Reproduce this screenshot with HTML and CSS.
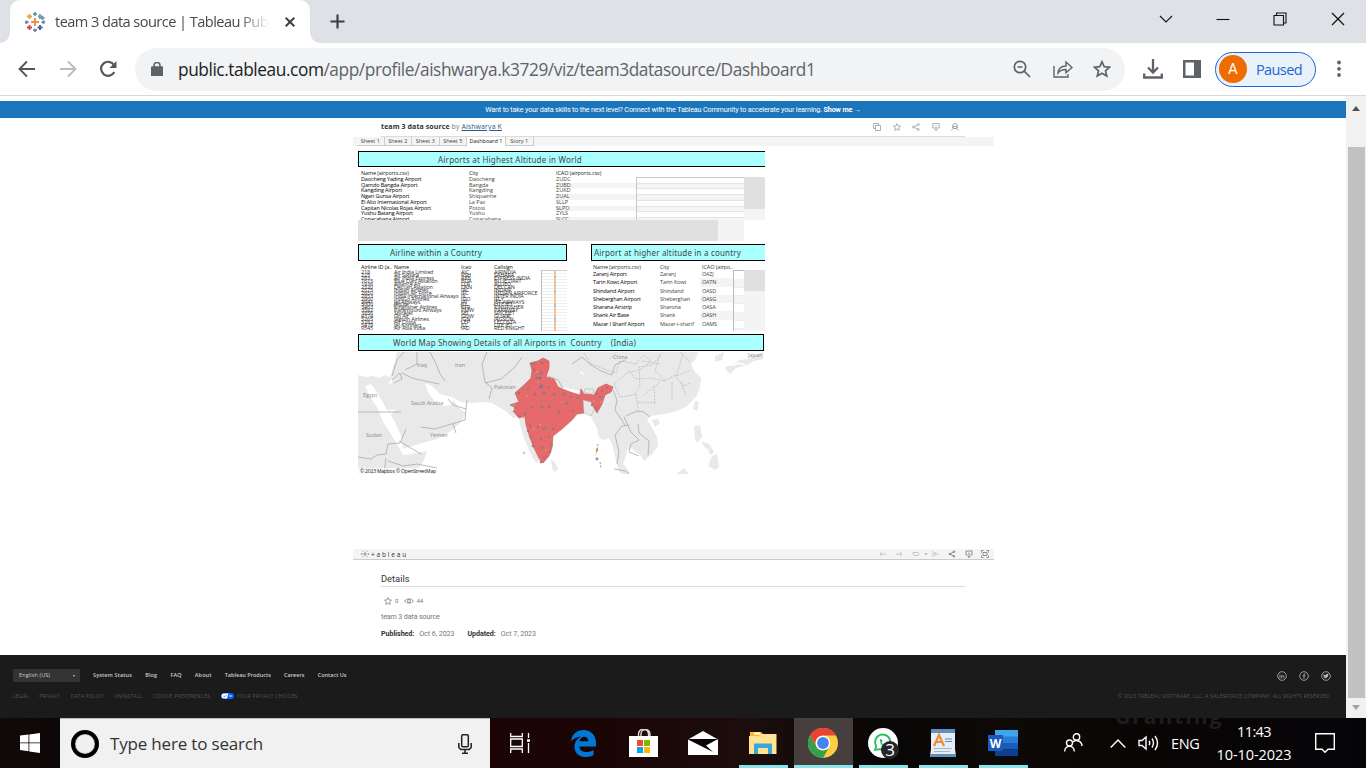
FILE: index.html
```html
<!DOCTYPE html>
<html lang="en">
<head>
<meta charset="utf-8">
<title>team 3 data source | Tableau Public</title>
<link rel="stylesheet" href="styles.css">
</head>
<body>
<div class="screen">
<header class="tabstrip">
  <div class="tab">
    <svg class="fav" viewBox="0 0 20 20" fill="none" stroke-width="1.8"><path stroke="#f28e4b" stroke-width="2" d="M10 6v8M6 10h8"/><path stroke="#6f9fae" d="M10 0v4M8 2h4M17.500 4v4M15.500 6h4"/><path stroke="#eaa23b" d="M4.500 2v5M2 4.500h5"/><path stroke="#6f9fae" d="M15 2v5M13 4.500h5"/><path stroke="#ce4257" d="M4.500 13v5M2 15.500h5"/><path stroke="#3f619c" d="M15 13v5M12.500 15.500h5"/><path stroke="#7a86b5" d="M10 16.500v3.500M8 18.200h4M1.500 8.500v3.500M0 10h3.500M18.500 8.500v3.500M16.500 10h3.500"/></svg>
    <span class="tabtitle"><span class="m-tab">team 3 data source | Tableau Pub</span></span>
    <svg class="x" viewBox="0 0 10 10" stroke="#3c4043" stroke-width="2"><path d="M.7.7l8.600 8.600M9.300.7L.7 9.300"/></svg>
  </div>
  <svg class="plus" viewBox="0 0 16 16" stroke="#3c4043" stroke-width="2.300"><path d="M8 .5v15M.5 8h15"/></svg>
  <div class="winbtns">
    <svg viewBox="0 0 14 14"><path d="M1 4l6 6 6-6"/></svg>
    <svg viewBox="0 0 14 14"><path d="M.5 7.500h13"/></svg>
    <svg viewBox="0 0 14 14"><path d="M1 3.500h9.500V13H1zM3.500 3.500v-2.500h9.500v10h-2.500"/></svg>
    <svg viewBox="0 0 14 14"><path d="M1 1l12 12M13 1L1 13" stroke-width="1.300"/></svg>
  </div>
</header>
<div class="toolbar">
  <div class="nav">
    <svg viewBox="0 0 18 18" stroke="#54585d"><path d="M17 9H2M9 1.500L1.500 9 9 16.500"/></svg>
    <svg viewBox="0 0 18 18" stroke="#b9bbbe"><path d="M1 9h15M9 1.500L16.500 9 9 16.500"/></svg>
    <svg viewBox="0 0 18 18" stroke="#54585d"><path stroke-width="2.200" d="M15.300 12A7 7 0 1 1 15 5"/><path fill="#54585d" stroke="none" d="M17.500 1v7h-7z"/></svg>
  </div>
  <div class="omni">
    <svg class="lock" viewBox="0 0 12 14"><rect x=".5" y="5" width="11" height="9" rx="1" fill="#5f6368"/><path d="M3 6V3.500a3 3 0 0 1 6 0V6" fill="none" stroke="#5f6368" stroke-width="1.600"/></svg>
    <div class="url"><span class="m-url"><b>public.tableau.com</b>/app/profile/aishwarya.k3729/viz/team3datasource/Dashboard1</span></div>
    <svg viewBox="0 0 18 18"><circle cx="7" cy="7" r="5.700"/><path d="M4.500 7h5M11.200 11.200L17 17" /></svg>
    <svg class="share" viewBox="0 0 20 18"><path d="M1 6v11h14v-3M5 13c.5-5 3-7 8-7V2l6 5.500-6 5.200V9.500c-4 0-6 1-8 3.500z" stroke-width="1.400"/></svg>
    <svg viewBox="0 0 18 18"><path d="M9 1.800l2.200 4.900 5.300.5-4 3.600 1.200 5.300L9 13.300l-4.700 2.800 1.200-5.300-4-3.600 5.300-.5z"/></svg>
  </div>
  <svg class="dl" viewBox="0 0 20 20" fill="none" stroke="#5f6368" stroke-width="2.300"><path d="M10 0v13M5 8.500l5 5 5-5M1.200 14.500v4h17.600v-4"/></svg>
  <svg class="side" viewBox="0 0 18 18"><path fill="#5f6368" fill-rule="evenodd" d="M0 0h18v18H0zM2.500 2.500v13h8.500v-13z"/></svg>
  <div class="profile"><span class="av">A</span><span class="m-paused">Paused</span></div>
  <svg class="dots" viewBox="0 0 4 18" fill="#5f6368"><circle cx="2" cy="2.500" r="1.900"/><circle cx="2" cy="8.800" r="1.900"/><circle cx="2" cy="15" r="1.900"/></svg>
</div>
<div class="viewport">
<main class="page">
  <div class="banner"><span class="m-banner">Want to take your data skills to the next level? Connect with the Tableau Community to accelerate your learning. <b>Show me →</b></span></div>
  <div class="titlebar">
    <span class="m-title"><b>team 3 data source</b> by <u>Aishwarya K</u></span>
    <div class="acts">
      <svg viewBox="0 0 8 8"><path d="M2.500 2.500h5v5h-5zM2.500 5.500h-2v-5h5v2"/></svg>
      <svg viewBox="0 0 8 8"><path d="M4 .5l1 2.400 2.600.2-2 1.700.7 2.600L4 6 1.700 7.400l.7-2.600-2-1.700L3 2.900z"/></svg>
      <svg viewBox="0 0 8 8"><circle cx="1.500" cy="4" r="1"/><circle cx="6.300" cy="1.500" r="1"/><circle cx="6.300" cy="6.500" r="1"/><path d="M2.400 3.500l3-1.500M2.400 4.500l3 1.500"/></svg>
      <svg viewBox="0 0 8 8"><path d="M3 5H.8V.6h6.400V5H5M4 2.500v5M2.600 6L4 7.500 5.400 6"/></svg>
      <svg viewBox="0 0 8 8"><path d="M1.500 5V3a2.500 2.500 0 0 1 5 0v2M.5 7.500l1.500-2h4l1.500 2M2.500 3.500h3v2h-3z"/></svg>
    </div>
  </div>
  <div class="viz">
    <nav class="sheets"><span>Sheet 1</span><span>Sheet 2</span><span>Sheet 3</span><span>Sheet 5</span><span class="on">Dashboard 1</span><span>Story 1</span></nav>
    <div class="dash">
      <h2 class="bar b1"><span class="m-h1">Airports at Highest Altitude in World</span></h2>
      <section class="alt">
        <div class="cols"><div class="hd">Name (airports.csv)</div><div class="hd">City</div><div class="hd">ICAO (airports.csv)</div></div>
        <div class="body">
          <div class="rows">
            <div><b>Daocheng Yading Airport</b><span>Daocheng</span><i>ZUDC</i></div>
            <div><b>Qamdo Bangda Airport</b><span>Bangda</span><i>ZUBD</i></div>
            <div><b>Kangding Airport</b><span>Kangding</span><i>ZUKD</i></div>
            <div><b>Ngari Gunsa Airport</b><span>Shiquanhe</span><i>ZUAL</i></div>
            <div><b>El Alto International Airport</b><span>La Paz</span><i>SLLP</i></div>
            <div><b>Capitan Nicolas Rojas Airport</b><span>Potosi</span><i>SLPO</i></div>
            <div><b>Yushu Batang Airport</b><span>Yushu</span><i>ZYLS</i></div>
            <div><b>Copacabana Airport</b><span>Copacabana</span><i>SLCC</i></div>
          </div>
          <div class="pane"></div><div class="vs"></div>
        </div>
        <div class="hs"></div>
      </section>
      <div class="pair">
        <section class="left">
          <h2 class="bar b2"><span class="m-h2">Airline within a Country</span></h2>
          <div class="lh"><div>Airline ID (a..</div><div>Name</div><div>Icao</div><div>Callsign</div></div>
          <div class="lb">
            <pre>218
225
283
1615
1936
2520
2575
2850
2853
2860
2941
3000
3463
3582
3856
4374
5265
5282
5479
9545</pre>
            <pre>Air India Limited
Air Sahara
Air India Express
Blue Dart Aviation
Alliance Air
Deccan Aviation
Indian Airlines
Indian Air Force
India International Airways
IndiGo Airlines
Jet Airways
JetLite
Kingfisher Airlines
Paramount Airways
Spicejet
Go Air
Jagson Airlines
Air Costa
Jet Konnect
Air Asia India</pre>
            <pre>AIC
RSH
AXB
BDA
LLR
DKN
IAC
IFC
IIL
IGO
JAI
JLL
KFR
PMW
SEJ
GOW
JGN
LEP
JLL
IAD</pre>
            <pre>AIRINDIA
SAHARA
EXPRESS INDIA
BLUE DART
ALLIED
DECCAN
INDAIR
INDIAN AIRFORCE
INTER INDIA
IFLY
JET AIRWAYS
LITE JET
KINGFISHER
PARAWAY
SPICEJET
GOAIR
JAGSON
LECOSTA
LITE JET
RED KNIGHT</pre>
            <div class="strip"><i></i></div>
          </div>
        </section>
        <section class="right">
          <h2 class="bar b3"><span class="m-h3">Airport at higher altitude in a country</span></h2>
          <div class="rh"><div>Name (airports.csv)</div><div>City</div><div>ICAO (airpo..</div></div>
          <div class="rb">
            <div class="rrows">
              <div><b>Zaranj Airport</b><span>Zaranj</span><i>OAZJ</i></div>
              <div><b>Tarin Kowt Airport</b><span>Tarin Kowt</span><i>OATN</i></div>
              <div><b>Shindand Airport</b><span>Shindand</span><i>OASD</i></div>
              <div><b>Sheberghan Airport</b><span>Sheberghan</span><i>OASG</i></div>
              <div><b>Sharana Airstrip</b><span>Sharona</span><i>OASA</i></div>
              <div><b>Shank Air Base</b><span>Shank</span><i>OASH</i></div>
              <div><b>Mazar I Sharif Airport</b><span>Mazar-i-sharif</span><i>OAMS</i></div>
            </div>
            <div class="rpane"></div><div class="rvs"></div>
          </div>
        </section>
      </div>
      <h2 class="bar b4"><span class="m-h4">World Map Showing Details of all Airports in&nbsp; Country &nbsp; &nbsp;(India)</span></h2>
      <svg class="map" viewBox="358 352 406 122">
        <g fill="#e9e9e9">
          <path d="M358 375l7 2 8-1 6 2 6-3 4 2 2-1 2-9 2-5 2-12h304l-3 3-3 7-4 4 4 8 6 6-1 10-4 9-9 9-10 5-12 3-14 2-4 3 4 7 6 11 1 9-6 8-8 7-3-5-5-4-5-4-4 2-1 6-3 8 5 6 4 8h-8l-6-9-3-13-3-12-3-6-5 2-5-2-2-10-5-9-3-9-5-5-6-4-2 13-7 1-5 6-9 8-8 7-2 12-3 8-5 7-3-3-5-10-5-12-4-13-1-9-6 2-6-6-8-5-7-4-8-1-12 1-11-1-9-5-12-3-8-8-7-3 3 9 7 10 8 4 8-1 2-5 6 8 7 5-5 9-10 9-14 8-18 5-16 5-2-13-6-14-9-14-9-16-6-8-6 2 4 9 8 12 6 15 8 12 7 12 5 9 8-1 16-3-3 9-9 14h-80z"/>
          <path d="M551 459l4 3 3 7-3 3-3-4zM652 420l6-1 2 4-5 4zM695 401l4 1-2 9-4-2zM694 426l6-1 2 12-5 6-2-4zM712 456l5-2 2 13-4 3-7-4zM701 441l8 3 5 8-3 3-7-9zM676 474l8-6 5 6zM715 356l9-4-2 8-7 2zM725 367l8-2 6-5 9-1 8-4 7-3v7l-9 2-9 5-9 2-6 6-4-4z"/>
        </g>
        <g fill="none" stroke="#fff" stroke-width="1.500"><path d="M384 412l10-2-4 5M580 372l4 2M697 445l5 7 7-3M733 366l5-3 7 2"/></g>
        <path fill="#fff" d="M568 396l17 3-1-7-12-3zM390 386l3-7-4 3zM560 389c9 1 13 4 21 5v-2l-17-5z"/>
        <g fill="none" stroke="#a9a9a9" stroke-width=".8">
          <path d="M358 412h36l7 0M392 376l5-16 7-8M392 380l8-7 2 6-8 4M402 373l10 5 13 3 14 3M405 370l12-6 0-12M430 352l6 12 4 10 5 7M448 399l5 6 13 4 1-9M466 409l-1 11-20 6-10 3-14-2M453 424l3 9M358 457l13 2 6-4 9-1 2-10 12-1 6-14M399 441l22 13M388 461l15 5 14-2 20 4M386 458l-2 15M487 352l-5 12 3 18 7 6-3 11M485 383l16-4 14-12 7-10M548 376l10 4 5 8"/>
          <path d="M572 364l10-7 9 8 10 6 11 4 3-10 10-5M613 390l4 10-2 10 6 9 4 6M626 416l11-5 7 1 6 5M629 425l-7 1-7 9 4 17-2 12M624 417l7 15 8 8-8 4-2 8 10 4M638 424l1 9 10 8-1 14M614 469l11 2 4 3"/>
        </g>
        <g fill="none" stroke="#b8b8b8" stroke-width=".7" stroke-dasharray="2 1"><path d="M584 353l6 10 14 6 12 4 4-12 16 3 7-9 8 6-9 8-15 4-13 11 6 13 14-2 6-9-1-19 13-2 9-10M628 370l8 9 15-1 14 3 10-6 8 11 8-3M636 394l2 16M654 386l1 18M672 382l0 17M660 354l-5 17 11 10M683 354l-7 22 15-6M644 395l16-13M681 382l5 14M610 359l7-7M642 361l18 3M638 402l17 1M690 362l-10-10"/></g>
        <path fill="#e66a6c" stroke="#c95f60" stroke-width=".7" d="M530 363l8-2 5-3 6 3v7l-3 9 8 2 4 8 7 3 5 2 10 3 1-6 3 5 10 1 4-7 8-4 7 3-2 5-6 3-3 9-5 9-3-5-4-5-7-2 1 12-7 1-5 6-10 9-9 7-1 12-3 8-6 7-3-3-5-10-5-12-4-13-1-9-6 2-6-7 4-3-7-3 9-3-4-9 9-8 7-7 1-8z"/>
        <path fill="#e9e9e9" stroke="#999" stroke-width=".4" d="M584 392l1-3h8l1 3-3 2zM583 400l8 2 3 7-3 7-7-3z"/>
        <g fill="#8a7f9a" stroke="#9b7357" stroke-width=".5"><circle cx="534" cy="364" r="1.100"/><circle cx="542" cy="363" r="1.100"/><circle cx="534" cy="370" r="1.200"/><circle cx="541" cy="373" r="1.200"/><circle cx="537" cy="378" r="1.200"/><circle cx="541" cy="387" r="1.200"/><circle cx="549" cy="387" r="1"/><circle cx="528" cy="389" r="1.200"/><circle cx="519" cy="393" r="1.200"/><circle cx="535" cy="394" r="1.200"/><circle cx="544" cy="393" r="1.200"/><circle cx="554" cy="394" r="1.200"/><circle cx="564" cy="394" r="1.200"/><circle cx="571" cy="397" r="1"/><circle cx="578" cy="398" r="1"/><circle cx="515" cy="408" r="1"/><circle cx="519" cy="416" r="1"/><circle cx="525" cy="414" r="1.100"/><circle cx="532" cy="407" r="1"/><circle cx="542" cy="407" r="1.200"/><circle cx="549" cy="407" r="1.100"/><circle cx="559" cy="412" r="1.200"/><circle cx="567" cy="403" r="1.200"/><circle cx="573" cy="411" r="1"/><circle cx="530" cy="426" r="1.100"/><circle cx="538" cy="427" r="1"/><circle cx="544" cy="429" r="1.100"/><circle cx="553" cy="429" r="1.100"/><circle cx="531" cy="437" r="1"/><circle cx="541" cy="439" r="1"/><circle cx="549" cy="437" r="1"/><circle cx="533" cy="446" r="1.100"/><circle cx="542" cy="448" r="1.100"/><circle cx="551" cy="445" r="1"/><circle cx="550" cy="452" r="1"/><circle cx="544" cy="457" r="1"/><circle cx="541" cy="462" r="1.100"/><circle cx="597" cy="394" r="1"/><circle cx="602" cy="391" r="1"/><circle cx="607" cy="388" r="1"/><circle cx="592" cy="405" r="1"/><circle cx="596" cy="408" r="1"/><circle cx="600" cy="397" r="1"/></g>
        <g fill="#d69a4c"><circle cx="537" cy="372" r="1"/><circle cx="538" cy="382" r="1"/><circle cx="527" cy="396" r="1"/><circle cx="514" cy="405" r="1"/><circle cx="524" cy="417" r="1"/><circle cx="562" cy="402" r="1"/><circle cx="534" cy="429" r="1"/><circle cx="540" cy="425" r="1"/><circle cx="546" cy="450" r="1"/><circle cx="601" cy="402" r="1"/><circle cx="594" cy="401" r="1"/><circle cx="524" cy="453" r="1.400" fill="#edc9a5"/><circle cx="597" cy="450" r="1.400"/></g>
        <g fill="#5a79a8"><circle cx="540" cy="378" r="1.300"/><circle cx="541" cy="386" r="1.300"/><circle cx="528" cy="431" r="1"/></g><g fill="#64a06e"><circle cx="542" cy="400" r="1"/><circle cx="552" cy="445" r="1"/><circle cx="546" cy="428" r="1"/><circle cx="531" cy="364" r="1"/></g>
        <path fill="none" stroke="#c08a8a" stroke-width="1" stroke-dasharray="2 1.500" d="M598 444l-2 11M600 462l1 6"/><circle cx="597" cy="459" r="1.400" fill="#8f8f8f"/>
        <g class="lab"><text x="417" y="366.500">Iraq</text><text x="455" y="367">Iran</text><text x="494" y="388.500">Pakistan</text><text x="363" y="396.500">Egypt</text><text x="411" y="404.500">Saudi Arabia</text><text x="366" y="436.500">Sudan</text><text x="430" y="436.500">Yemen</text><text x="613" y="359">China</text><text x="748" y="356.500">Japan</text></g>
        <path fill="#fff" opacity=".7" d="M358 468h78v6h-78z"/><text class="attr" x="360" y="473">© 2023 Mapbox © OpenStreetMap</text>
      </svg>
    </div>
    <div class="vizbar">
      <svg class="tl" viewBox="0 0 8 8"><path d="M4 2v4M2 4h4M2 .8v1M6 .8v1M2 6.200v1M6 6.200v1M.6 3v2M7.400 3v2"/></svg><span class="m-tableau">+ableau</span>
      <div class="vi">
        <svg viewBox="0 0 8 8"><path d="M7 4H1M3 2L1 4l2 2"/></svg><svg viewBox="0 0 8 8"><path d="M1 4h6M5 2l2 2-2 2"/></svg><svg viewBox="0 0 8 8"><path d="M1 2.500h5l1.300 1.500L6 5.500H2L.7 4z"/></svg><svg class="car" viewBox="0 0 4 8"><path d="M1 3.500h2L2 5z" fill="#aaa"/></svg><svg viewBox="0 0 8 8"><path d="M1 1v6M7 4H2M4 2L2 4l2 2"/></svg><svg class="dk" viewBox="0 0 8 8"><circle cx="1.800" cy="4" r=".8"/><circle cx="6" cy="1.700" r=".8"/><circle cx="6" cy="6.300" r=".8"/><path d="M2 4l4-2.300M2 4l4 2.300"/></svg><svg class="dk" viewBox="0 0 8 8"><path d="M2.500 5H1V1h6v4H5.500M4 2.500v5M2.600 6L4 7.500 5.400 6"/></svg><svg class="dk" viewBox="0 0 8 8"><path d="M2 2.500h4v3H2zM.5 2.500v-2h2M5.500.5h2v2M.5 5.500v2h2M7.500 5.500v2h-2"/></svg>
      </div>
    </div>
  </div>
  <section class="details">
    <h3><span class="m-det">Details</span></h3>
    <div class="stats"><svg viewBox="0 0 8 8"><path d="M4 .5l1 2.400 2.600.2-2 1.700.7 2.600L4 6 1.700 7.400l.7-2.600-2-1.700L3 2.900z"/></svg><span>0</span><svg class="eye" viewBox="0 0 10 8"><path d="M.5 4Q5-.5 9.500 4 5 8.500.5 4z"/><circle cx="5" cy="4" r="1.500"/></svg><span>44</span></div>
    <p class="desc"><span class="m-desc">team 3 data source</span></p>
    <p class="dates"><b class="m-pub">Published:</b><span class="m-pd">Oct 6, 2023</span><b class="m-upd">Updated:</b><span class="m-ud">Oct 7, 2023</span></p>
  </section>
  <footer class="foot">
    <div class="f1"><span class="lang">English (US)<i></i></span><span class="l1">System Status</span><span class="l2">Blog</span><span class="l3">FAQ</span><span class="l4">About</span><span class="l5">Tableau Products</span><span class="l6">Careers</span><span>Contact Us</span>
      <div class="soc"><svg viewBox="0 0 10 10"><circle cx="5" cy="5" r="4.300"/><path d="M3 4.300v3M3 2.800v.7M4.700 7.300v-3M4.700 5.300q1.200-1.800 2.300 0v2"/></svg><svg viewBox="0 0 10 10"><circle cx="5" cy="5" r="4.300"/><path d="M5 8V3.500q0-1 1.500-.8M3.700 4.800h2.600"/></svg><svg viewBox="0 0 10 10"><circle cx="5" cy="5" r="4.300"/><path fill="#bbb" stroke="none" d="M2.300 3q1.300 1.200 2.600 1.200.3-2 1.900-1.200l1-.2-.5 1C7.200 6.500 4.500 8 2.200 6.800q1 0 1.400-.5Q2.300 5.500 2.300 3z"/></svg></div></div>
    <div class="f2"><span class="k1">LEGAL</span><span class="k2">PRIVACY</span><span class="k3">DATA POLICY</span><span class="k4">UNINSTALL</span><span class="k5">COOKIE PREFERENCES</span><svg viewBox="0 0 13 6"><rect width="13" height="6" rx="3" fill="#06f"/><path d="M3 .5h4.500L6 5.500H3a2.500 2.500 0 0 1 0-5z" fill="#fff"/><path d="M2.500 3l1 1L5.500 2" fill="none" stroke="#06f" stroke-width=".7"/><path d="M8.500 2l2 2m0-2l-2 2" stroke="#fff" stroke-width=".7"/></svg><span class="k6">YOUR PRIVACY CHOICES</span><span class="copy">© 2023 TABLEAU SOFTWARE, LLC, A SALESFORCE COMPANY. ALL RIGHTS RESERVED.</span></div>
  </footer>
</main>
<aside class="scroll"><i class="up"></i><div class="thumb"></div><i class="dn"></i></aside>
</div>
<footer class="task">
  <div class="start"><svg viewBox="0 0 20 20" fill="#fff"><path d="M0 2.500L8.500 1.500V9.400H0zM9.300 1.400L20 0v9.400H9.300zM0 10.300h8.500v8L0 17zM9.300 10.300H20V20L9.300 18.500z"/></svg></div>
  <div class="search"><span class="ring"></span><span class="m-search">Type here to search</span><svg viewBox="0 0 14 20" fill="none" stroke="#222" stroke-width="1.500"><rect x="3.700" y=".8" width="6.600" height="12" rx="1"/><path d="M.8 9v4.500l2 2h8.400l2-2V9M7 15.500V19M4 19.200h6"/></svg></div>
  <div class="ti tv"><svg width="21" height="20" viewBox="0 0 21 20" fill="none" stroke="#fff" stroke-width="1.300"><path d="M.7 0v3.500h11.600V0M.7 6h11.600v7.500H.7zM.7 20v-4h11.600v4M18.500 0v5M18.500 10v10"/><path fill="#fff" stroke="none" d="M17 6.300h3v2.500h-3z"/></svg></div>
  <div class="ti"><svg width="25" height="27" viewBox="0 0 25 27"><path fill="#0078d7" d="M0 11.500C1 4 6 0 12.500 0 20 0 25 5.500 25 13v3.500H8.500c0 6 8.500 7 14 3.500v5.200C14 29.500 3.500 26 3.500 17 3.500 11 7.500 7.500 10.500 6.500 5 7 2 9 0 11.500zM8.500 11.300h8.700C17.200 5 9.500 5.500 8.500 11.300z"/></svg></div>
  <div class="ti"><svg width="29" height="28" viewBox="0 0 29 28"><path fill="none" stroke="#ddd" stroke-width="1.400" d="M9.500 8V5a5 5 0 0 1 10 0v3M12 8V5a4.500 4.500 0 0 1 9 0v3"/><path fill="#fff" d="M0 7h29v21H0z"/><path fill="#f25022" d="M8 11h6v6H8z"/><path fill="#7fba00" d="M15 11h6v6h-6z"/><path fill="#00a4ef" d="M8 18h6v6H8z"/><path fill="#ffb900" d="M15 18h6v6h-6z"/></svg></div>
  <div class="ti"><svg width="30" height="24" viewBox="0 0 30 24"><path fill="#fff" d="M0 8.500L15 0l15 8.500V24H0z"/><path fill="#0b0605" d="M0 8h30l-12 6.500 7 6.500L.5 8.700z"/></svg></div>
  <div class="ti run"><svg width="28" height="24" viewBox="0 0 28 24"><path fill="#f5bd36" d="M1 1h11l2 2h13v20H1z"/><path fill="#fff" d="M5 1.500h6v2H5z"/><path fill="#ffe391" d="M0 5h10l2-2h15.500v20H0z"/><path fill="#37a8dc" d="M5 23V12.500h18V23h-4v-6H9v6z"/></svg></div>
  <div class="ti run chrome"><svg width="30" height="30" viewBox="0 0 30 30"><circle cx="15" cy="15" r="15" fill="#ffcd40"/><path fill="#ea4335" d="M2 7.500A15 15 0 0 1 28 7.500H15a7.500 7.500 0 0 0-6.500 11.300z"/><path fill="#34a04f" d="M2 7.500A15 15 0 0 0 15 30l6.500-11.200a7.500 7.500 0 0 1-13 0z"/><circle cx="15" cy="15" r="7.300" fill="#fff"/><circle cx="15" cy="15" r="5.900" fill="#4284f3"/></svg></div>
  <div class="ti run"><svg width="31" height="31" viewBox="0 0 31 31"><circle cx="15" cy="15" r="15" fill="#fff"/><path fill="none" stroke="#25c05e" stroke-width="1.800" d="M7 22l1.200-4A7.600 7.600 0 1 1 12 21.200z"/><path fill="#25c05e" d="M12 11l2 .5.5 2-1 1 3 3 1.500-1 2 1c-1 5-9 0-8-6.500z"/><circle cx="22" cy="22" r="9" fill="#25262d"/><text x="22" y="28" text-anchor="middle" class="n3">3</text></svg></div>
  <div class="ti run"><svg width="26" height="28" viewBox="0 0 26 28"><path fill="#e5edf5" d="M1 2h24v18l1 7H0l1-7z"/><path fill="#5f8fbd" d="M1 0h24v4H1zM0 25h26v3H0z"/><path d="M4 17L9 6l5 11M5.500 13h7" fill="none" stroke="#ee8e34" stroke-width="2.200"/><path stroke="#5b8dc4" d="M15 10h7M15 12.500h7"/><path stroke="#a6b7c9" d="M4 19.500h18M4 22.500h16"/></svg></div>
  <div class="ti run"><svg width="30" height="26" viewBox="0 0 30 26"><path fill="#41a5ee" d="M7 0h23v7H7z"/><path fill="#2b7cd3" d="M7 6.500h23V13H7z"/><path fill="#185abd" d="M7 13h23v6.500H7z"/><path fill="#103f91" d="M7 19.500h23V26H7z"/><path fill="#185abd" d="M0 5h15v16H0z"/><text x="7.500" y="17.500" text-anchor="middle" class="w">W</text></svg></div>
  <div class="tray">
    <svg class="people" viewBox="0 0 19 20"><circle cx="5.500" cy="10" r="3"/><path d="M.7 18.500c0-7 9.600-7 9.600 0"/><circle cx="12.500" cy="4" r="3.200"/><path d="M9 9c3-3 9-1 9 4"/></svg>
    <svg class="chev" viewBox="0 0 16 9"><path d="M.7 8.500L8 1l7.300 7.500"/></svg>
    <svg class="spk" viewBox="0 0 21 18"><path d="M1 6.500h3L8 3v12l-4-3.500H1zM11 7q1.500 2 0 4M14 4.500q3 4.500 0 9M17 2q5 7 0 14"/></svg>
    <span class="m-eng">ENG</span>
    <span class="clock"><span class="m-time">11:43</span><span class="m-date">10-10-2023</span></span>
    <svg class="note" viewBox="0 0 20 20"><path d="M.7.7h18.600v15.600H13l-3 3-3-3H.7z"/></svg>
  </div>
  <span class="wall">Granting</span>
</footer>
</div>
</body>
</html>
```
FILE: styles.css
```css
*{box-sizing:border-box}
body{margin:0;font-family:"Open Sans","Noto Sans",sans-serif;overflow:hidden;color:#333}
svg{display:block;flex:none}
p,h2,h3{margin:0;font-weight:400}
i{font-style:normal}
span{white-space:nowrap}
.screen{width:1366px;height:768px;display:flex;flex-direction:column;overflow:hidden;background:#fff}
.tabstrip{height:43px;background:#dee1e6;display:flex;align-items:center;flex:none}
.tab{margin-left:10px;width:300px;height:43px;background:#fff;border-radius:10px 10px 0 0;display:flex;align-items:center;padding-left:15px;position:relative}
.tab:before,.tab:after{content:"";position:absolute;bottom:0;width:10px;height:10px}
.tab:before{left:-10px;background:radial-gradient(circle at 0 0,#dee1e6 9.500px,#fff 10px)}
.tab:after{right:-10px;background:radial-gradient(circle at 100% 0,#dee1e6 9.500px,#fff 10px)}
.fav{width:20px;height:20px;margin-right:10px}
.tabtitle{width:214px;overflow:hidden;font-size:14.600px;margin-top:-2px;color:#45494d;-webkit-mask:linear-gradient(90deg,#000 86%,transparent)}
.m-tab{letter-spacing:-.56px}
.x{width:10px;height:10px;margin-left:16px}
.plus{width:15px;height:15px;margin-left:20px}
.winbtns{margin-left:auto;display:flex;gap:43.200px;padding-right:21.500px;margin-top:-6px}
.winbtns svg{width:14px;height:14px;fill:none;stroke:#111;stroke-width:1.100}
.toolbar{height:53px;border-bottom:1px solid #d9d9d9;display:flex;align-items:center;flex:none}
.nav{display:flex;gap:22.500px;padding-left:18px;width:135px}
.nav svg{width:18px;height:18px;fill:none;stroke-width:1.900}
.omni{width:990px;height:43px;border-radius:22px;background:#f1f3f4;display:flex;align-items:center;padding-left:16px}
.omni svg{width:18px;height:18px;fill:none;stroke:#5f6368;stroke-width:1.700;margin-right:22px}
.omni .lock{width:12px;height:14px;margin-right:15px}
.omni .share{width:20px;margin-right:20px}
.omni svg:last-child{margin-right:14px}
.url{font-size:17.300px;flex:1;color:#5f6368}
.m-url{letter-spacing:-.425px}
.url b{font-weight:400;color:#202124}
.dl{width:20px;height:20px;margin-left:18px}
.side{width:18px;height:18px;margin-left:20px}
.profile{width:101px;height:35px;border:1.500px solid #1967d2;border-radius:18px;background:#e9f1fb;margin-left:14px;display:flex;align-items:center;padding-left:3px;color:#1967d2;font-size:14.500px;letter-spacing:-.6px;gap:9px}
.av{width:28px;height:28px;border-radius:50%;background:#ef6c00;color:#fff;font:15px/28px Roboto,sans-serif;text-align:center;letter-spacing:0}
.dots{width:4px;height:18px;margin-left:21px}
.viewport{height:622px;display:flex;flex:none}
.page{width:1346px;padding-top:5px;display:flex;flex-direction:column}
.page>*{flex:none}
.scroll{width:20px;background:#f1f1f1;display:flex;flex-direction:column;align-items:center;padding:10px 0 8px}
.scroll i{border:4.500px solid transparent}
.up{border-top-width:0!important;border-bottom:5px solid #505050!important}
.dn{border-bottom-width:0!important;border-top:5px solid #a3a3a3!important;margin-top:auto}
.thumb{width:17px;margin-left:1px;height:551px;flex:none;background:#c1c1c1;margin-top:36px}
.banner{height:17px;background:#1b75bb;color:#fff;font:7.200px/17px Roboto,sans-serif;text-align:center}
.m-banner{letter-spacing:-.155px}
.titlebar{height:19px;margin:0 381px;border-bottom:1px solid #dcdcdc;display:flex;align-items:center;justify-content:space-between;font-size:7px;color:#777}
.m-title{letter-spacing:.09px;margin-top:-1px}
.titlebar b{color:#333}.titlebar u{color:#2a5a8c}
.acts{display:flex;gap:11.500px;padding-right:6px}
.acts svg{width:8px;height:8px;fill:none;stroke:#999;stroke-width:.8}
.viz{width:641px;margin-left:353px}
.sheets{height:9px;background:#f4f4f4;display:flex;padding-left:4px;font:5.500px/9px "Open Sans",sans-serif;color:#444}
.sheets span{border-right:1px solid #ccc;border-bottom:1px solid #ccc;width:27.500px;text-align:center;height:9px;line-height:8px}
.sheets .on{background:#fff;border-bottom:0;width:39px;color:#111}
.dash{height:403px;padding:5px 0 0 5px}
.bar{border:1px solid #000;background:#aff;height:17px;color:#444;line-height:15px;font-size:8px;font-family:"Noto Sans",sans-serif}
.m-h1{letter-spacing:.218px}.m-h2{letter-spacing:.165px}.m-h3{letter-spacing:.177px}.m-h4{letter-spacing:.18px}
.b1{width:407px;height:16px;border-right:0;padding-left:79px}
.alt{width:407px;height:74px}
.cols{height:10px;display:grid;grid-template-columns:108px 87px 100px;padding:2px 0 0 3px;font-size:5.500px;line-height:9px;letter-spacing:-.1px;color:#222}
.body{height:43px;display:flex;overflow:hidden;font-size:5.500px;line-height:5.720px;color:#222}
.rows{width:278px}
.rows div{display:grid;grid-template-columns:108px 86px 81px;padding-left:3px}
.rows b,.rrows b{font-weight:400;color:#000;letter-spacing:-.14px}
.rows span,.rrows span,.rows i,.rrows i{color:#444}
.rows i{padding-left:1px}
.rows div:nth-child(even) i,.rrows div:nth-child(even) i{background:#f4f4f4}
.pane{width:108px;border-left:1px solid #c8c8c8;border-top:1px solid #c8c8c8;background:repeating-linear-gradient(#fff 0 4.700px,#e4e4e4 4.700px 5.700px,#f4f4f4 5.700px 10.400px,#e4e4e4 10.400px 11.400px)}
.vs{width:21px;background:linear-gradient(#e0e0e0 32px,#f4f4f4 0)}
.hs{height:21px;width:386px;background:linear-gradient(90deg,#e0e0e0 360px,#f4f4f4 0)}
.pair{display:flex;gap:24px;margin-top:3px;height:90px;overflow:hidden}
.left{width:209px}.right{width:174px}
.b2{padding-left:31px}.b3{border-right:0;padding-left:2px}
.lh,.lb{display:grid;grid-template-columns:33px 67px 33px 47px 26px;padding-left:3px;font-size:5.500px;color:#111}
.lh{letter-spacing:-.1px}
.lh,.rh{line-height:10px;height:9px;padding-top:1px}
.lh div,.rh div,.cols div{white-space:nowrap}
.lb{height:61px;overflow:hidden}
.lb pre{margin:0;font:5.500px/2.950px "Open Sans",sans-serif;letter-spacing:-.15px;color:#333;padding-top:1px}
.strip{border-left:1px solid #bbb;border-top:1px solid #ccc;background:repeating-linear-gradient(#fff 0 2px,#eee 2px 3px);display:flex;justify-content:center}
.strip i{width:2px;background:repeating-linear-gradient(#f5c396 0 5px,#a9c3df 5px 8px,#f5c396 8px 14px)}
.rh{display:grid;grid-template-columns:67px 42px 60px;padding-left:2px;font-size:5.500px;letter-spacing:-.1px}
.rb{display:flex;height:61px;font-size:5.500px;line-height:8.300px}
.rrows{width:142px}
.rrows div{display:grid;grid-template-columns:67px 40px 33px;padding-left:2px;height:8.300px}
.rrows i{padding-left:2px;letter-spacing:-.2px}
.rrows b,.rrows span{white-space:nowrap}
.rrows span{letter-spacing:-.1px}
.rpane{width:11px;border-left:1px solid #bbb;border-top:1px solid #bbb;background:repeating-linear-gradient(#fff 0 7.500px,#eee 7.500px 8.300px,#f4f4f4 8.300px 15.800px,#eee 15.800px 16.600px)}
.rvs{width:21px;background:linear-gradient(#e0e0e0 21px,#f4f4f4 0)}
.b4{width:406px;padding-left:34px}
.map{width:406px;height:122px;margin-top:1px}
.lab{font:5.500px "Open Sans",sans-serif;fill:#8a8a8a}
.attr{font:5px "Open Sans",sans-serif;letter-spacing:-.18px;fill:#222}
.vizbar{height:11px;background:#f4f4f4;border-bottom:1px solid #ccc;display:flex;align-items:center;padding-left:8px}
.tl,.vi svg{width:8px;height:8px;fill:none;stroke:#b5b5b5;stroke-width:.7}
.tl{stroke:#777;margin-right:2px}
.m-tableau{font-size:6.500px;line-height:9px;letter-spacing:1.830px;color:#333}
.vi{margin-left:auto;display:flex;padding-right:5px}
.vi svg{margin-left:8.500px}
.vi svg.car{width:4px;margin-left:4px}.vi .car+svg{margin-left:4px}
.vi .dk{stroke:#666}
.details{margin:14px 381px 0;height:81px;font:7.100px/10px Roboto,sans-serif;letter-spacing:-.05px;color:#777}
.details h3{height:13px;border-bottom:1px solid #dcdcdc;font-size:9.300px;line-height:10px;letter-spacing:0;color:#333}
.stats{display:flex;align-items:center;padding:9px 0 0 3px;font-size:6.200px}
.stats svg{width:8px;height:8px;fill:none;stroke:#777;stroke-width:.7;margin-right:3px}
.stats .eye{width:10px;margin-left:6px;margin-right:2px}
.desc{margin-top:6px;letter-spacing:-.12px}.dates{margin-top:7px;display:flex}
.dates b{color:#333}.m-pub,.m-upd{margin-right:5px}.m-pd{margin-right:13px}
.foot{height:63px;background:#1b1b1b;padding:14px 15px 0 13px;color:#ccc;font-size:5.500px}
.f1,.f2{display:flex;align-items:center}
.f1{height:13px;line-height:11px;font-weight:600}
.lang{width:67px;height:13px;background:#333;line-height:13px;padding:0 5px 0 6px;margin-right:13px;font-weight:400;letter-spacing:.1px;display:flex;justify-content:space-between;align-items:center}
.lang i{border:1.500px solid transparent;border-top:2px solid #ccc;border-bottom:0}
.l1,.l2,.l3,.l4,.l5,.l6{margin-right:13.200px}
.l1,.l2,.l3,.l4{letter-spacing:.12px}
.soc{margin-left:auto;display:flex;gap:12px}
.soc svg{width:10px;height:10px;fill:none;stroke:#bbb;stroke-width:.8}
.f2{height:10px;margin-top:9px;color:#555;font-size:5px;letter-spacing:.22px}
.f2 svg{width:13px;height:6px;margin-right:3px}
.k1,.k2,.k3,.k4,.k5{margin-right:10.300px}
.k5{letter-spacing:.3px}
.copy{margin-left:auto;letter-spacing:.242px}
.task{height:50px;background:linear-gradient(90deg,#100b08 0,#0d0807 60px,#1c0405 480px,#1a0505 600px,#1c0e0c 750px,#080606 880px,#0d0a08 1000px,#0a0505 1150px,#050508 1366px);display:flex;flex:none;position:relative;overflow:hidden}
.start{width:60px;display:flex;align-items:center;justify-content:center}
.start svg{width:20px;height:20px}
.search{width:430px;background:#f1f1f1;border-top:1px solid #bbb;display:flex;align-items:center;padding:0 18px 0 11px;color:#333;font-size:17px;letter-spacing:-.18px}
.ring{width:28px;height:28px;border:4px solid #000;border-radius:50%;margin-right:11px;box-shadow:inset 0 0 1px #000}
.search svg{width:14px;height:20px;margin-left:auto}
.ti{width:60px;display:flex;align-items:center;justify-content:center;position:relative}
.tv{width:63px;padding-right:3px}
.run:after{content:"";position:absolute;bottom:0;left:6px;width:49px;height:3px;background:#8ae3e8}
.chrome{background:linear-gradient(90deg,transparent 1px,#473f3e 1px)}
.chrome:after{left:1px;width:59px}
.n3{font:17px "Open Sans",sans-serif;fill:#fff}.w{font:bold 12px "Open Sans",sans-serif;fill:#fff}
.tray{display:flex;align-items:center;margin-left:31px;color:#fff;font-size:14.500px}
.tray svg{fill:none;stroke:#fff;stroke-width:1.400}
.people{width:19px;height:20px;margin-right:27px}
.chev{width:16px;height:9px;margin-right:12px}
.spk{width:21px;height:18px;margin-right:12px}
.m-eng{letter-spacing:-.4px;width:29px}
.m-time{letter-spacing:-.6px}.m-date{letter-spacing:-.07px}
.clock{display:flex;flex-direction:column;align-items:center;width:76px;margin-left:16px;line-height:23px}
.note{width:20px;height:20px;margin-left:23px}
.wall{position:absolute;left:1115px;top:-17px;font:bold 21px/30px "Open Sans",sans-serif;color:#1f1d1d;letter-spacing:2px}
```
